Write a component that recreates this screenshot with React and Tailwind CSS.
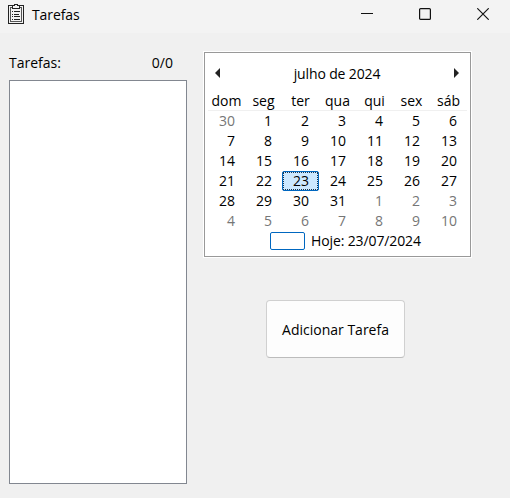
const WEEKDAYS = ['dom', 'seg', 'ter', 'qua', 'qui', 'sex', 'sáb'];

const DAYS = [
  { day: 30, outside: true },
  ...Array.from({ length: 31 }, (_, i) => ({ day: i + 1, outside: false })),
  ...Array.from({ length: 10 }, (_, i) => ({ day: i + 1, outside: true })),
];

function ClipboardIcon() {
  return (
    <svg width="16" height="20" viewBox="0 0 16 20" fill="none" stroke="#222" shapeRendering="crispEdges">
      <path d="M4.5 1.5H0.5V19.5H15.5V1.5H11.5" />
      <path d="M4 3.5H2.5V17.5H13.5V3.5H12" stroke="#555" />
      <path d="M4.5 4.5V1.5H6.5V0.5H9.5V1.5H11.5V4.5Z" fill="#f3f3f3" />
      <path d="M4 7.5H5M6 7.5H12M4 10.5H5M6 10.5H11M4 12.5H5M6 12.5H12M4 15.5H5M6 15.5H12" />
    </svg>
  );
}

function TitleBar() {
  return (
    <header className="flex h-[33px] items-start bg-[#f3f3f3] pl-2 pr-[21px]">
      <div className="pt-1">
        <ClipboardIcon />
      </div>
      <h1 className="ml-2 mt-[5px] flex-1 text-[14px] leading-5 tracking-[-0.1px]">Tarefas</h1>
      <div className="flex items-start gap-[46px] pt-2">
        <svg width="12" height="12" viewBox="0 0 12 12" stroke="#111">
          <path d="M0 5.5H12" />
        </svg>
        <svg width="12" height="12" viewBox="0 0 12 12" fill="none" stroke="#111" strokeWidth="1.2">
          <rect x="0.6" y="0.6" width="10.8" height="10.8" rx="1" />
        </svg>
        <svg width="12" height="12" viewBox="0 0 12 12" stroke="#111" strokeWidth="1.15">
          <path d="M0.3 0.3L11.7 11.7M11.7 0.3L0.3 11.7" />
        </svg>
      </div>
    </header>
  );
}

function Day({ day, outside }) {
  if (day === 23) {
    return (
      <div className="h-5 rounded-[2px] border border-[#0067c0] bg-[#cce8ff]">
        <div className="h-[18px] border border-dotted border-[#17344d] pr-2 text-right leading-4">{day}</div>
      </div>
    );
  }
  return (
    <div className={outside ? 'h-5 pr-[10px] text-right text-[#767676]' : 'h-5 pr-[10px] text-right'}>{day}</div>
  );
}

function Calendar() {
  return (
    <section className="h-[205px] w-[267px] border border-[#999] bg-white px-[3px] text-[14px] leading-5 outline outline-white">
      <div className="flex h-[38px] items-start justify-between pl-[7px] pr-2 pt-[11px]">
        <svg className="mt-1" width="5" height="10" viewBox="0 0 5 10" fill="#222">
          <path d="M5 0V10L0 5Z" />
        </svg>
        <span className="tracking-[-0.14px]">julho de 2024</span>
        <svg className="mt-1" width="5" height="10" viewBox="0 0 5 10" fill="#222">
          <path d="M0 0V10L5 5Z" />
        </svg>
      </div>
      <div className="grid h-5 w-[259px] grid-cols-7 border-b border-[#f0f0f0] text-center">
        {WEEKDAYS.map((name) => (
          <span key={name}>{name}</span>
        ))}
      </div>
      <div className="grid w-[259px] grid-cols-7">
        {DAYS.map((item, i) => (
          <Day key={i} {...item} />
        ))}
      </div>
      <div className="flex h-5 items-center pl-[62px]">
        <span className="h-[18px] w-[35px] rounded-[2px] border border-[#0067c0]" />
        <span className="ml-[6px] tracking-[-0.12px]">Hoje: 23/07/2024</span>
      </div>
    </section>
  );
}

export default function App() {
  return (
    <div className="h-[498px] w-[510px] overflow-hidden bg-[#f0f0f0] font-['Open_Sans','Noto_Sans',sans-serif] text-black">
      <TitleBar />
      <main className="flex gap-[17px] pl-[9px] pt-[19px]">
        <div className="w-[178px]">
          <div className="flex h-7 items-start justify-between pr-[14px] text-[14px] leading-[21px]">
            <span>Tarefas:</span>
            <span>0/0</span>
          </div>
          <div className="h-[404px] border border-[#828790] bg-white" />
        </div>
        <div className="w-[267px]">
          <Calendar />
          <button className="ml-[62px] mt-[43px] h-[58px] w-[139px] whitespace-nowrap rounded-[4px] border border-[#d0d0d0] border-b-[#bcbcbc] bg-[#fdfdfd] text-[14px]">
            Adicionar Tarefa
          </button>
        </div>
      </main>
    </div>
  );
}
